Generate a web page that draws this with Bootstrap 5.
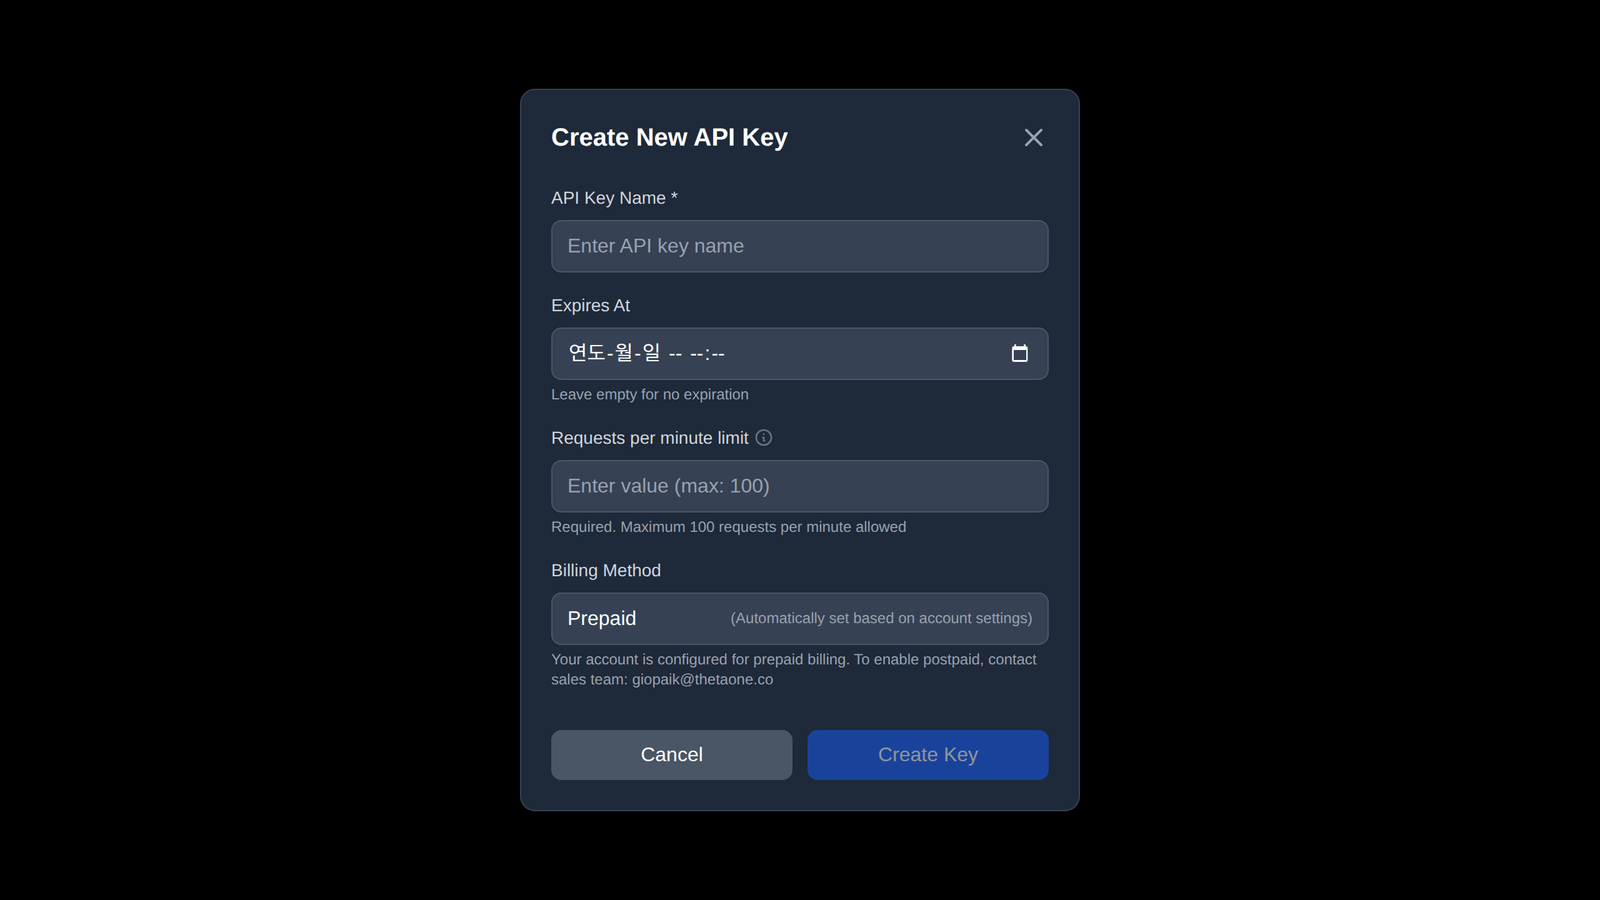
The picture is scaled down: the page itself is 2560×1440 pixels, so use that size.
<!DOCTYPE html>
<html lang="en">
<head>
<meta charset="utf-8">
<title>Create New API Key</title>
<link href="https://cdn.jsdelivr.net/npm/bootstrap@5.3.0/dist/css/bootstrap.min.css" rel="stylesheet">
<style>
html, body { height: 100%; }
body { background: #000; font-family: "Liberation Sans", Arial, sans-serif; text-rendering: geometricPrecision; }
.key-dialog { width: 896px; background: #1e2939; border: 2px solid #364153; border-radius: 24px; padding: 48px; color: #fff; }
.key-title { font-size: 40px; line-height: 56px; font-weight: 700; color: #fff; margin: 0; }
.key-close { width: 48px; height: 48px; padding: 0; background: none; border: 0; color: #99a1af; }
.key-close svg { display: block; }
.key-head { margin-bottom: 48px; }
.key-field { margin-bottom: 32px; }
.key-label { display: block; font-size: 28px; line-height: 42px; color: #d1d5dc; margin-bottom: 14px; }
.key-label svg { display: block; color: #6a7282; margin-top: 4px; }
.key-input.form-control { background: #364153; border: 2px solid #4a5565; border-radius: 16px; color: #fff; font-size: 32px; line-height: 48px; padding: 15px 24px 17px; height: 84px; box-shadow: none; }
.key-input.form-control::placeholder { color: #99a1af; opacity: 1; }
.key-date { font-family: "Liberation Sans", "Noto Sans CJK KR", sans-serif; }
.key-seg { padding: 0 2px; }
.key-cal { margin-top: 2px; }
.key-hint { font-size: 24px; line-height: 32px; color: #99a1af; margin-top: 8px; }
.key-note { font-size: 24px; line-height: 32px; color: #99a1af; margin-top: 2px; }
.key-actions { margin-top: 64px; gap: 24px; }
.key-btn { flex: 1 1 0; font-size: 32px; line-height: 48px; padding: 15px 24px 17px; border: 0; border-radius: 16px; }
.key-cancel, .key-cancel:hover { background: #4a5565; color: #fff; }
.key-create, .key-create:disabled { background: #155dfc; color: #fff; opacity: .5; }
</style>
</head>
<body class="d-flex align-items-center justify-content-center">
<div class="key-dialog">
  <div class="key-head d-flex align-items-center justify-content-between">
    <h2 class="key-title">Create New API Key</h2>
    <button type="button" class="key-close" aria-label="Close">
      <svg width="48" height="48" viewBox="0 0 24 24" fill="none" stroke="currentColor" stroke-width="2" stroke-linecap="round" stroke-linejoin="round"><path d="M6 18L18 6M6 6l12 12"/></svg>
    </button>
  </div>
  <form>
    <div class="key-field">
      <label class="key-label">API Key Name *</label>
      <input type="text" class="form-control key-input" placeholder="Enter API key name">
    </div>
    <div class="key-field">
      <label class="key-label">Expires At</label>
      <div class="form-control key-input key-date d-flex align-items-center justify-content-between">
        <span><span class="key-seg">연도</span>-<span class="key-seg">월</span>-<span class="key-seg">일</span> <span class="key-seg">--</span> <span class="key-seg">--</span>:<span class="key-seg">--</span></span>
        <svg class="key-cal" width="40" height="40" viewBox="0 0 40 40" fill="#fff" fill-rule="evenodd"><path d="M11 5h2.700v3h12.300v-3h3v3h.3a3 3 0 0 1 3 3v19a3 3 0 0 1-3 3h-19a3 3 0 0 1-3-3v-19a3 3 0 0 1 3-3h.7z M10 14v16h20v-16z"/></svg>
      </div>
      <div class="key-hint">Leave empty for no expiration</div>
    </div>
    <div class="key-field">
      <label class="key-label d-flex align-items-start gap-2">Requests per minute limit
        <svg width="32" height="32" viewBox="0 0 24 24" fill="none" stroke="currentColor" stroke-width="2" stroke-linecap="round" stroke-linejoin="round"><path d="M13 16h-1v-4h-1m1-4h.01M21 12a9 9 0 11-18 0 9 9 0 0118 0z"/></svg>
      </label>
      <input type="text" class="form-control key-input" placeholder="Enter value (max: 100)">
      <div class="key-hint">Required. Maximum 100 requests per minute allowed</div>
    </div>
    <div>
      <label class="key-label">Billing Method</label>
      <div class="form-control key-input d-flex align-items-center justify-content-between">
        <span>Prepaid</span>
        <span class="key-note">(Automatically set based on account settings)</span>
      </div>
      <div class="key-hint">Your account is configured for prepaid billing. To enable postpaid, contact sales team: giopaik@thetaone.co</div>
    </div>
    <div class="key-actions d-flex">
      <button type="button" class="btn key-btn key-cancel">Cancel</button>
      <button type="button" class="btn key-btn key-create" disabled>Create Key</button>
    </div>
  </form>
</div>
<script src="https://cdn.jsdelivr.net/npm/bootstrap@5.3.0/dist/js/bootstrap.bundle.min.js"></script>
</body>
</html>
